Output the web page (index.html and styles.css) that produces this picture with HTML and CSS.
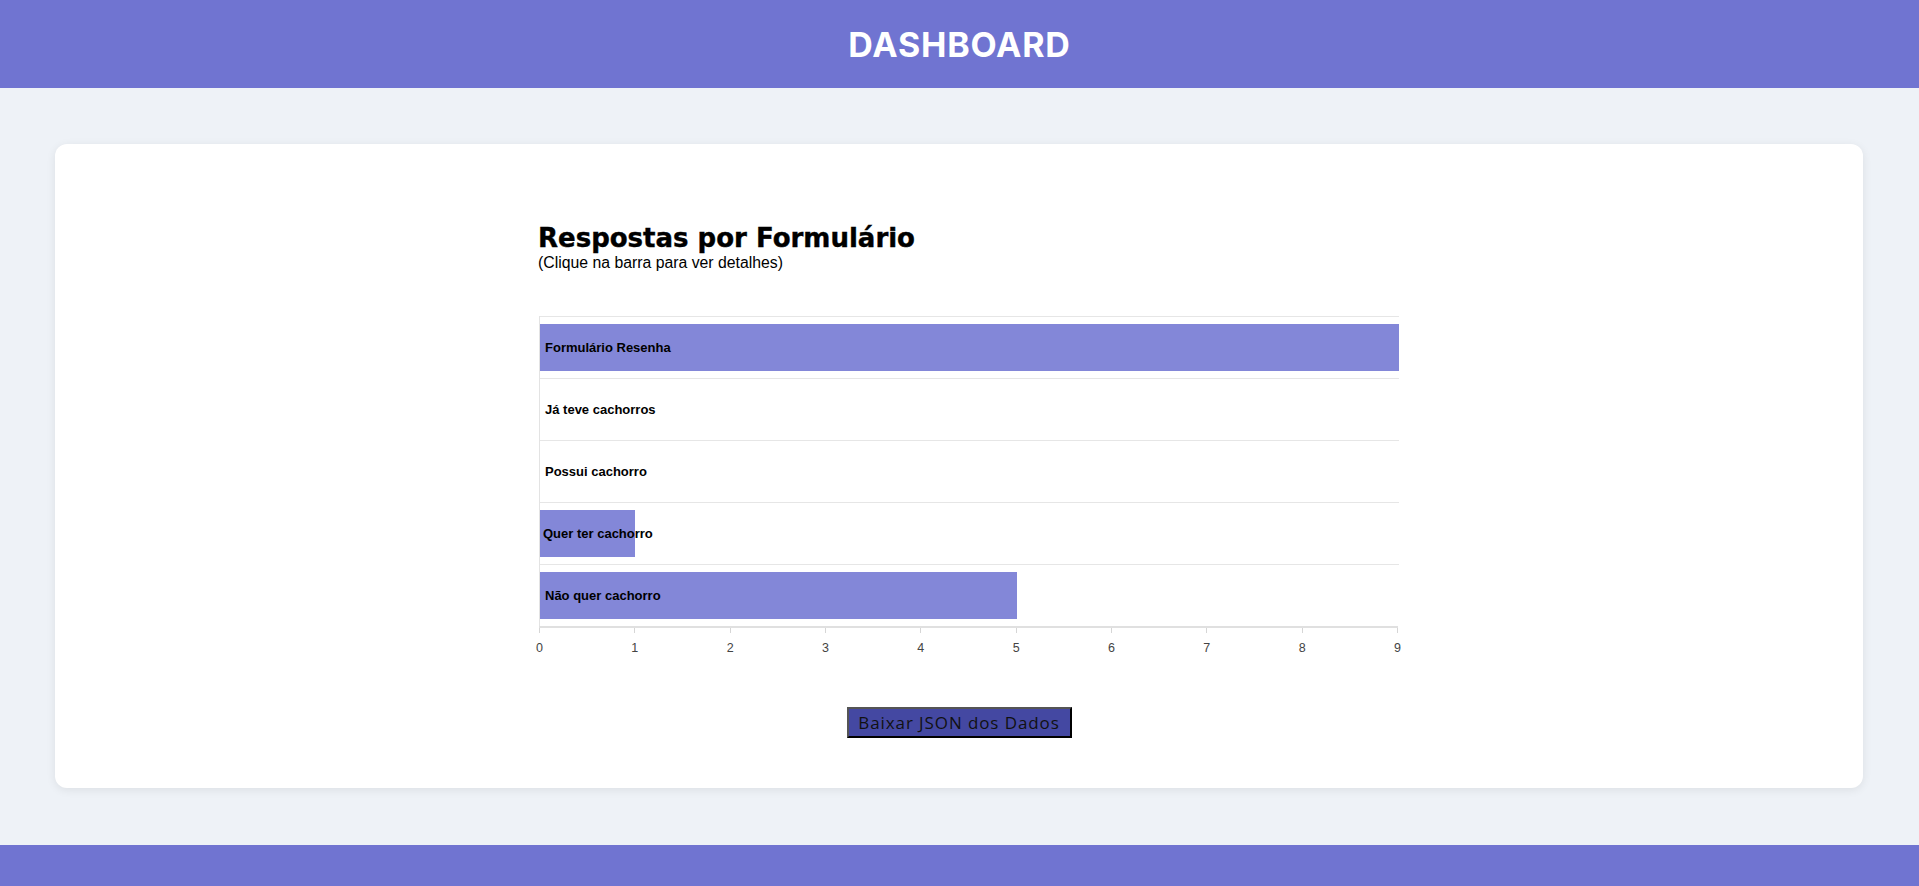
FILE: index.html
```html
<!DOCTYPE html>
<html lang="pt-BR">
<head>
<meta charset="utf-8">
<title>Dashboard</title>
<link rel="stylesheet" href="styles.css">
</head>
<body>
<header class="topbar">
  <h1 class="topbar-title">DASHBOARD</h1>
</header>
<main class="main">
  <section class="card">
    <div class="chart">
      <h2 class="chart-title">Respostas por Formulário</h2>
      <p class="chart-subtitle">(Clique na barra para ver detalhes)</p>
      <div class="plot">
        <div class="row"><div class="bar" style="width:100%"></div><span class="label">Formulário Resenha</span></div>
        <div class="row"><div class="bar" style="width:0%"></div><span class="label">Já teve cachorros</span></div>
        <div class="row"><div class="bar" style="width:0%"></div><span class="label">Possui cachorro</span></div>
        <div class="row"><div class="bar" style="width:11.11%"></div><span class="label label-tight">Quer ter cachorro</span></div>
        <div class="row"><div class="bar" style="width:55.56%"></div><span class="label">Não quer cachorro</span></div>
      </div>
      <div class="axis">
        <div class="tick"><span>0</span></div>
        <div class="tick"><span>1</span></div>
        <div class="tick"><span>2</span></div>
        <div class="tick"><span>3</span></div>
        <div class="tick"><span>4</span></div>
        <div class="tick"><span>5</span></div>
        <div class="tick"><span>6</span></div>
        <div class="tick"><span>7</span></div>
        <div class="tick"><span>8</span></div>
        <div class="tick"><span>9</span></div>
      </div>
    </div>
    <div class="actions">
      <button class="download-btn" type="button">Baixar JSON dos Dados</button>
    </div>
  </section>
</main>
<footer class="footer"></footer>
</body>
</html>
```

FILE: styles.css
```css
html, body {
  margin: 0;
  padding: 0;
}
body {
  background: #eef2f7;
  font-family: "Liberation Sans", Arial, sans-serif;
  color: #000;
}
.topbar {
  height: 88px;
  background: #7074d1;
  display: flex;
  align-items: center;
  justify-content: center;
}
.topbar-title {
  margin: 0;
  font-family: Inter, "Open Sans", sans-serif;
  font-weight: 700;
  font-size: 34px;
  letter-spacing: 0.8px;
  color: #fff;
}
.main {
  padding: 56px 56px 57px 55px;
}
.card {
  background: #fff;
  border-radius: 12px;
  box-shadow: 0 2px 10px rgba(0, 0, 0, 0.08);
  height: 644px;
  box-sizing: border-box;
  padding: 78px 0 0 483px;
}
.chart {
  width: 860px;
}
.chart-title {
  margin: 0;
  font-family: "DejaVu Sans", sans-serif;
  font-weight: 700;
  font-size: 26px;
  line-height: 32px;
  -webkit-text-stroke: 0.4px #000;
}
.chart-subtitle {
  margin: 0;
  font-size: 15.8px;
  line-height: 18px;
}
.plot {
  margin-top: 44px;
  margin-left: 1px;
  width: 859px;
  border-left: 1px solid #e3e3e3;
}
.row {
  display: grid;
  align-items: center;
  height: 62px;
  box-sizing: border-box;
  border-top: 1px solid #e6e6e6;
  padding: 7px 0;
}
.bar, .label {
  grid-area: 1 / 1;
}
.bar {
  height: 47px;
  background: #8387d8;
}
.label {
  padding-left: 5px;
  font-size: 13px;
  font-weight: 700;
}
.label-tight {
  padding-left: 3px;
}
.axis {
  margin-left: 1px;
  width: 859px;
  border-top: 2px solid #e0e0e0;
  display: flex;
  justify-content: space-between;
}
.tick {
  width: 1px;
  height: 5px;
  background: #d6d6d6;
  display: flex;
  justify-content: center;
}
.tick span {
  margin-top: 13px;
  font-size: 12.5px;
  line-height: 14px;
  color: #444;
  white-space: nowrap;
}
.actions {
  margin-left: -483px;
  margin-top: 74px;
  display: flex;
  justify-content: center;
}
.download-btn {
  width: 225px;
  height: 31px;
  box-sizing: border-box;
  background: #4448a2;
  border: 2px solid;
  border-color: #555 #000 #000 #555;
  font-family: "Open Sans", Inter, sans-serif;
  font-size: 17px;
  letter-spacing: 0.9px;
  color: #111;
  padding: 0;
}
.footer {
  height: 41px;
  background: #7074d1;
}
```
